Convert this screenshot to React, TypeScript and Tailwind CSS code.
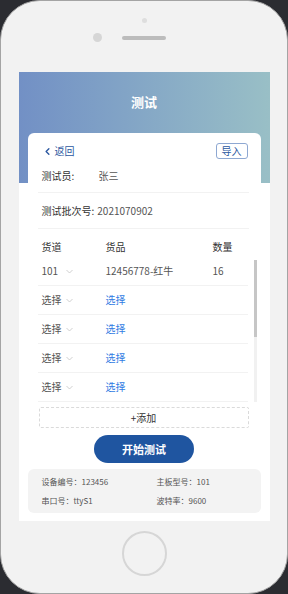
import { ChevronLeft } from "lucide-react";

interface Row {
  channel: string;
  goods: string;
  qty: string;
  picked: boolean;
}

const rows: Row[] = [
  { channel: "101", goods: "12456778-红牛", qty: "16", picked: true },
  { channel: "选择", goods: "选择", qty: "", picked: false },
  { channel: "选择", goods: "选择", qty: "", picked: false },
  { channel: "选择", goods: "选择", qty: "", picked: false },
  { channel: "选择", goods: "选择", qty: "", picked: false },
];

const info = [
  ["设备编号：123456", "主板型号：101"],
  ["串口号：ttyS1", "波特率：9600"],
];

function ChevronDown() {
  return (
    <svg width="7" height="5" viewBox="0 0 7 5" fill="none">
      <polyline points="0.5,1 3.5,4 6.5,1" stroke="#c4c4c4" strokeWidth="0.8" />
    </svg>
  );
}

export default function App() {
  return (
    <div className="w-[288px] h-[594px] bg-[#2b2c31] font-['Noto_Sans_CJK_SC',sans-serif]">
      <div className="h-full rounded-[40px] bg-[#f2f2f2] border border-[#a4a4a4] flex flex-col items-center">
        {/* phone top */}
        <div className="h-[71px] flex flex-col items-center pt-[17px]">
          <div className="w-[5px] h-[5px] rounded-full bg-[#dedede]" />
          <div className="flex items-center mt-[10px]">
            <div className="w-[9px] h-[9px] rounded-full bg-[#d6d6d6]" />
            <div className="w-[44px] h-[4px] rounded-full bg-[#bcbcbc] ml-[20px]" />
            <div className="w-[29px]" />
          </div>
        </div>

        {/* screen */}
        <div className="w-[251px] h-[449px] bg-white flex flex-col">
          <div className="h-[111px] bg-gradient-to-r from-[#7290c5] to-[#99bfc6] flex justify-center pt-[21px]">
            <span className="text-white text-[13px] font-bold leading-[18px]">测试</span>
          </div>

          <div className="relative -mt-[50px] mx-[9px] bg-white rounded-t-[6px] flex flex-col">
            <div className="flex items-center justify-between h-[16px] mt-[10px] pl-[14px] pr-[13px]">
              <div className="flex items-center text-[#2b57a0] text-[10px] leading-[16px]">
                <ChevronLeft size={11} strokeWidth={3} />
                <span className="ml-[2px]">返回</span>
              </div>
              <div className="w-[32px] h-[16px] border border-[#8ea8d2] rounded-[3px] flex items-center justify-center text-[10px] text-[#2b57a0] leading-none">
                导入
              </div>
            </div>

            <div className="pl-[10px] pr-[12px] text-[10px] leading-[16px]">
              <div className="h-[34px] flex items-center border-b border-[#f2f2f2] pl-[4px]">
                <span className="w-[57px] text-[#333]">测试员:</span>
                <span className="text-[#555]">张三</span>
              </div>
              <div className="h-[36px] flex items-center border-b border-[#f2f2f2] pl-[4px]">
                <span className="text-[#333]">测试批次号:</span>
                <span className="text-[#555] ml-[3px]">2021070902</span>
              </div>
              <div className="h-[28px] flex pt-[10px] pl-[4px] text-[#333]">
                <span className="w-[64px]">货道</span>
                <span className="w-[107px]">货品</span>
                <span>数量</span>
              </div>
            </div>

            <div className="flex pl-[10px]">
              <div className="w-[210px] text-[10px] leading-[16px]">
                {rows.map((r, i) => (
                  <div key={i} className="h-[29px] flex items-center border-b border-[#f2f2f2] pl-[4px]">
                    <div className="w-[64px] flex items-center text-[#555]">
                      <span className="w-[24px]">{r.channel}</span>
                      <ChevronDown />
                    </div>
                    <span className={`w-[107px] ${r.picked ? "text-[#555]" : "text-[#2f7be3]"}`}>{r.goods}</span>
                    <span className="text-[#555]">{r.qty}</span>
                  </div>
                ))}
              </div>
              <div className="ml-[6px] w-[3px] pt-[3px] flex flex-col">
                <div className="h-[77px] bg-[#c6c6c6]" />
                <div className="h-[65px] bg-[#f1f1f1]" />
              </div>
            </div>

            <div className="mt-[5px] ml-[11px] mr-[12px] h-[21px] border border-dashed border-[#dadada] rounded-[2px] flex items-center justify-center text-[10px] text-[#333]">
              +添加
            </div>

            <button className="mt-[7px] self-center w-[100px] h-[28px] rounded-full bg-[#1f55a0] text-white text-[11px] font-bold">
              开始测试
            </button>

            <div className="mt-[6px] h-[44px] bg-[#f3f3f3] rounded-[6px] grid grid-cols-[115px_1fr] gap-y-[7px] pl-[14px] pt-[7px] text-[8px] leading-[12px] text-[#555] content-start">
              {info.flat().map((t) => (
                <span key={t}>{t}</span>
              ))}
            </div>
          </div>
        </div>

        {/* home button */}
        <div className="mt-[10px] w-[45px] h-[45px] rounded-full border-2 border-[#d6d6d6]" />
      </div>
    </div>
  );
}
